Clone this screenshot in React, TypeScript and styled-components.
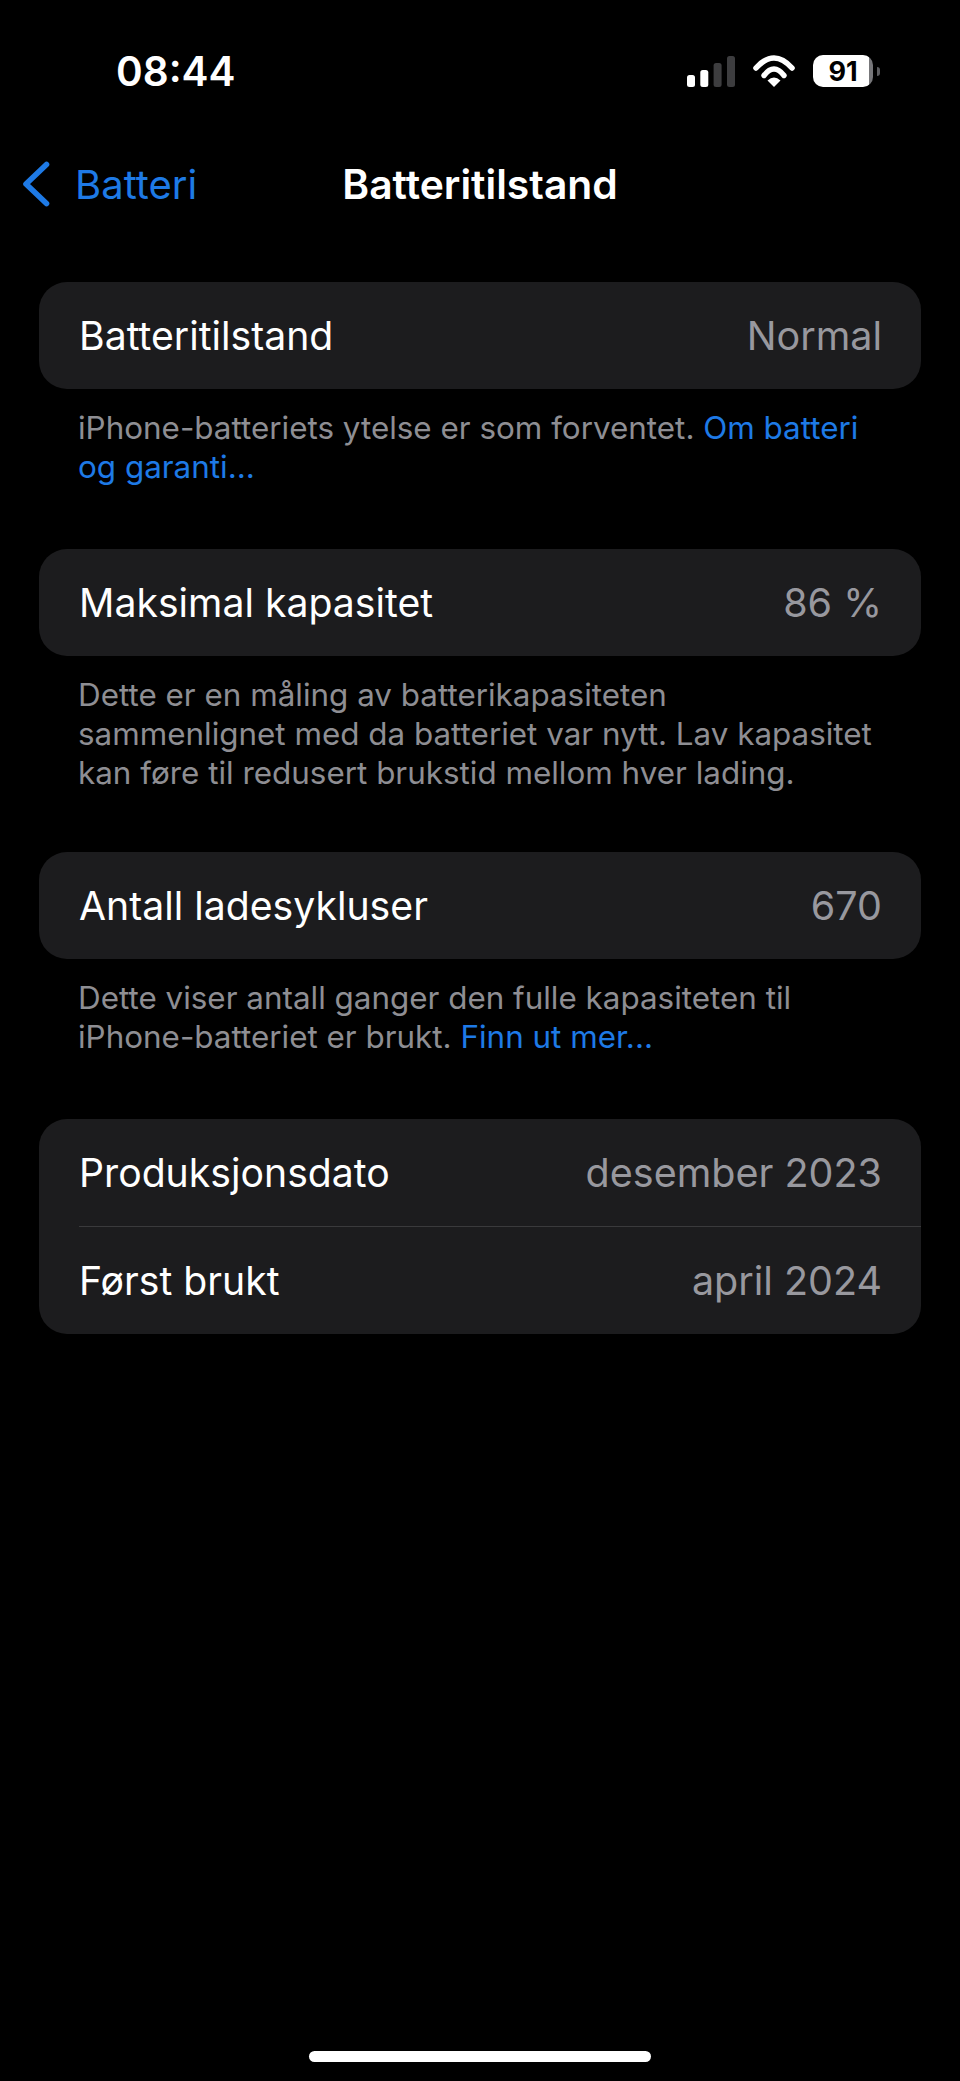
import type { ReactNode } from "react";
import styled, { createGlobalStyle } from "styled-components";

const GlobalStyle = createGlobalStyle`
  html, body {
    margin: 0;
    padding: 0;
    background: #000;
  }
  body {
    font-family: Inter, "Liberation Sans", sans-serif;
    -webkit-font-smoothing: antialiased;
  }
`;

const FooterLink = styled.span`
  color: #1e7ae6;
`;

type Row = { label: string; value: string };

const SECTIONS: { rows: Row[]; spacing: number; footer?: ReactNode }[] = [
  {
    rows: [{ label: "Batteritilstand", value: "Normal" }],
    spacing: 62,
    footer: (
      <>
        iPhone-batteriets ytelse er som forventet. <FooterLink>Om batteri</FooterLink>
        <br />
        <FooterLink>og garanti...</FooterLink>
      </>
    ),
  },
  {
    rows: [{ label: "Maksimal kapasitet", value: "86 %" }],
    spacing: 59,
    footer: (
      <>
        Dette er en måling av batterikapasiteten
        <br />
        sammenlignet med da batteriet var nytt. Lav kapasitet
        <br />
        kan føre til redusert brukstid mellom hver lading.
      </>
    ),
  },
  {
    rows: [{ label: "Antall ladesykluser", value: "670" }],
    spacing: 62,
    footer: (
      <>
        Dette viser antall ganger den fulle kapasiteten til
        <br />
        iPhone-batteriet er brukt. <FooterLink>Finn ut mer...</FooterLink>
      </>
    ),
  },
  {
    rows: [
      { label: "Produksjonsdato", value: "desember 2023" },
      { label: "Først brukt", value: "april 2024" },
    ],
    spacing: 0,
  },
];

const SIGNAL_BARS = [
  { x: 0, h: 12, on: true },
  { x: 13.3, h: 17, on: true },
  { x: 26.6, h: 24, on: false },
  { x: 40, h: 31, on: false },
];

export default function App() {
  return (
    <Page>
      <GlobalStyle />
      <StatusBar>
        <Clock>08:44</Clock>
        <StatusIcons>
          <svg width="48" height="31" viewBox="0 0 48 31">
            {SIGNAL_BARS.map((bar) => (
              <rect
                key={bar.x}
                x={bar.x}
                y={31 - bar.h}
                width="8"
                height={bar.h}
                rx="2.5"
                fill={bar.on ? "#fff" : "#3d3d3f"}
              />
            ))}
          </svg>
          <svg width="42" height="32" viewBox="0 0 42 32" fill="none" stroke="#fff">
            <path d="M3 13Q21 -7 39 13" strokeWidth="5.6" strokeLinecap="round" />
            <path d="M11 20.5Q21 7.5 31 20.5" strokeWidth="5.4" strokeLinecap="round" />
            <path d="M14.5 25.5Q21 19.5 27.5 25.5L21 32Z" fill="#fff" stroke="none" />
          </svg>
          <Battery>
            <BatteryBody>91</BatteryBody>
            <BatteryTip />
          </Battery>
        </StatusIcons>
      </StatusBar>

      <NavBar>
        <BackLink>
          <svg width="28" height="46" viewBox="0 0 28 46" fill="none">
            <path
              d="M24.5 3.5L4 23L24.5 42.5"
              stroke="#1e7ae6"
              strokeWidth="5.6"
              strokeLinecap="round"
              strokeLinejoin="round"
            />
          </svg>
          Batteri
        </BackLink>
        <NavTitle>Batteritilstand</NavTitle>
      </NavBar>

      <Sections>
        {SECTIONS.map((section) => (
          <Section key={section.rows[0].label} $spacing={section.spacing}>
            <Card>
              {section.rows.map((row) => (
                <CardRow key={row.label}>
                  <RowLabel>{row.label}</RowLabel>
                  <RowValue>{row.value}</RowValue>
                </CardRow>
              ))}
            </Card>
            {section.footer && <Footer>{section.footer}</Footer>}
          </Section>
        ))}
      </Sections>

      <HomeIndicator />
    </Page>
  );
}

const Page = styled.div`
  display: flex;
  flex-direction: column;
  width: 960px;
  height: 2081px;
  overflow: hidden;
  background: #000;
  color: #fff;
`;

const StatusBar = styled.div`
  display: flex;
  align-items: center;
  justify-content: space-between;
  height: 70px;
  margin-top: 36px;
  padding: 0 80px 0 116px;
`;

const Clock = styled.span`
  padding-top: 2px;
  font-size: 40.5px;
  font-weight: 600;
  line-height: 68px;
`;

const StatusIcons = styled.div`
  display: flex;
  align-items: center;
  gap: 18px;
`;

const Battery = styled.div`
  display: flex;
  align-items: center;
  gap: 4px;
`;

const BatteryBody = styled.div`
  display: flex;
  align-items: center;
  justify-content: center;
  width: 60px;
  height: 32px;
  border-radius: 10px;
  background: linear-gradient(to right, #fff 93%, #77777a 93%);
  color: #000;
  font-size: 27px;
  font-weight: 700;
`;

const BatteryTip = styled.div`
  width: 3px;
  height: 9px;
  border-radius: 0 4px 4px 0;
  background: #5c5c5f;
`;

const NavBar = styled.div`
  position: relative;
  display: flex;
  align-items: center;
  justify-content: center;
  height: 68px;
  margin-top: 44px;
`;

const BackLink = styled.div`
  position: absolute;
  left: 22px;
  display: flex;
  align-items: center;
  gap: 25px;
  color: #1e7ae6;
  font-size: 40px;
`;

const NavTitle = styled.h1`
  margin: 0;
  font-size: 40.8px;
  font-weight: 600;
  color: #fff;
`;

const Sections = styled.div`
  display: flex;
  flex-direction: column;
  margin-top: 64px;
  padding: 0 39px;
`;

const Section = styled.section<{ $spacing: number }>`
  display: flex;
  flex-direction: column;
  margin-bottom: ${({ $spacing }) => $spacing}px;
`;

const Card = styled.div`
  overflow: hidden;
  border-radius: 28px;
  background: #1c1c1e;
`;

const CardRow = styled.div`
  display: flex;
  align-items: center;
  justify-content: space-between;
  height: 107px;
  padding-right: 39px;
  margin-left: 40px;

  & + & {
    border-top: 1px solid #3a3a3c;
  }
`;

const RowLabel = styled.span`
  font-size: 39.2px;
  color: #fff;
`;

const RowValue = styled.span`
  font-size: 39.5px;
  color: #98989e;
`;

const Footer = styled.p`
  margin: 20px 0 0;
  padding: 0 39px;
  font-size: 31.4px;
  line-height: 39px;
  color: #8e8e93;
`;

const HomeIndicator = styled.div`
  flex-shrink: 0;
  width: 342px;
  height: 11px;
  margin: auto auto 19px;
  border-radius: 6px;
  background: #fff;
`;
